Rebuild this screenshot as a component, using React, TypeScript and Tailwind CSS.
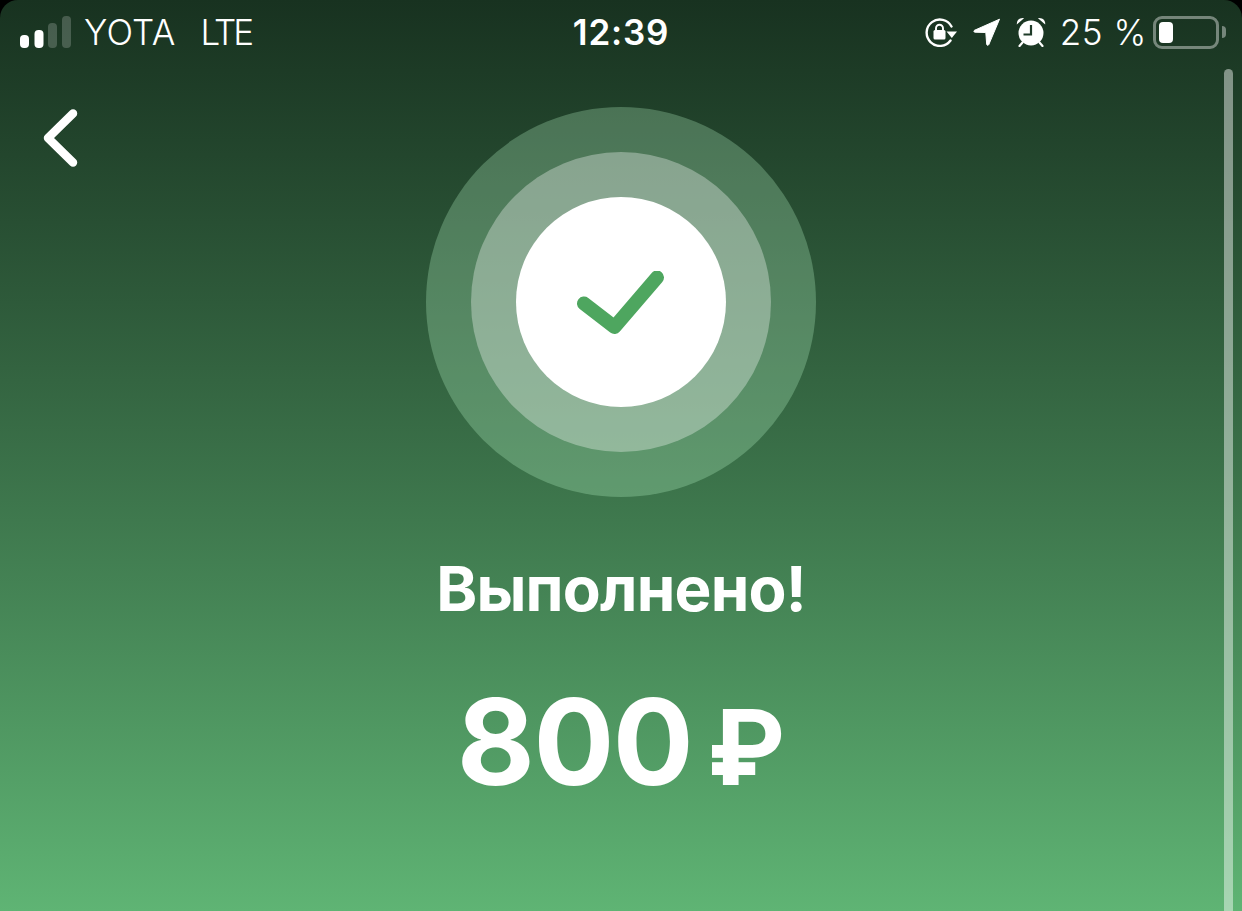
const font = "font-['Inter',_'Noto_Sans',_sans-serif]";

function SignalBars() {
  return (
    <svg width="52" height="32" viewBox="0 0 52 32" className="shrink-0">
      <rect x="0" y="19" width="9" height="13" rx="4" fill="#fff" />
      <rect x="14.500" y="14" width="9" height="18" rx="4" fill="#fff" />
      <rect x="28" y="7" width="9" height="25" rx="4" fill="#fff" fillOpacity="0.2" />
      <rect x="42" y="0" width="9" height="32" rx="4" fill="#fff" fillOpacity="0.2" />
    </svg>
  );
}

function RotationLock() {
  return (
    <svg width="32" height="30" viewBox="0 0 32 30" fill="none" className="shrink-0">
      <path d="M26.500 9.500A13.200 13.200 0 1 0 25.500 23.500" stroke="#fff" strokeWidth="2.400" strokeLinecap="round" />
      <path d="M21.500 14.500h10.500l-5.200 6.500z" fill="#fff" />
      <rect x="8.500" y="13" width="12" height="9.500" rx="1.500" fill="#fff" />
      <path d="M11 13.500v-2.300a3.500 3.500 0 0 1 7 0v2.300" stroke="#fff" strokeWidth="1.900" />
    </svg>
  );
}

function LocationArrow() {
  return (
    <svg width="28" height="28" viewBox="0 0 28 28" className="shrink-0">
      <path d="M26.500 1.200 1.500 12.300c-1 .5-.7 1.900.4 1.900l10.900.3.900 11.800c.1 1.200 1.600 1.400 2.100.3z" fill="#fff" stroke="#fff" strokeWidth="1" strokeLinejoin="round" />
    </svg>
  );
}

function AlarmClock() {
  return (
    <svg width="30" height="30" viewBox="0 0 30 30" fill="none" className="shrink-0">
      <circle cx="15" cy="16" r="12.500" fill="#fff" />
      <path d="M15 8v9.500H7.500" stroke="#1e3a28" strokeWidth="2.200" />
      <path d="M.8 7.500C.5 3.500 3.500.5 8 1.200z" fill="#fff" />
      <path d="M29.200 7.500C29.500 3.500 26.500.5 22 1.200z" fill="#fff" />
      <path d="M6.500 25.500 3.500 29M23.500 25.500l3 3.500" stroke="#fff" strokeWidth="2.200" strokeLinecap="round" />
    </svg>
  );
}

function Battery() {
  return (
    <div className="flex items-center shrink-0">
      <div className="w-[66px] h-[33px] rounded-[9px] border-[3px] border-white/40 p-[3px]">
        <div className="w-[14px] h-full rounded-[4px] bg-white" />
      </div>
      <div className="ml-[3px] w-[4px] h-[12px] rounded-r-full bg-white/40" />
    </div>
  );
}

function StatusBar() {
  return (
    <div className="grid grid-cols-[1fr_auto_1fr] items-center h-[64px] text-white text-[35px] leading-none">
      <div className="flex items-center pl-[20px]">
        <SignalBars />
        <span className="ml-[12px] font-light tracking-[0.3px]">YOTA</span>
        <span className="ml-[25px] font-light tracking-[-3px]">LTE</span>
      </div>
      <div className="font-semibold tracking-[0.8px]">12:39</div>
      <div className="flex items-center justify-end pr-[16px]">
        <RotationLock />
        <div className="ml-[16px]"><LocationArrow /></div>
        <div className="ml-[15px]"><AlarmClock /></div>
        <span className="ml-[14px] font-light tracking-[0.6px]">25 %</span>
        <div className="ml-[6px]"><Battery /></div>
      </div>
    </div>
  );
}

function CheckCircle() {
  return (
    <div className="rounded-full bg-[#c0ffd0]/27 p-[45px]">
      <div className="rounded-full bg-white/33 p-[45px]">
        <div className="w-[210px] h-[210px] rounded-full bg-white flex items-center justify-center">
          <svg width="90" height="66" viewBox="0 0 90 66" fill="none" className="mt-[3px] ml-[-1px]">
            <path d="M8 32.500 38.500 56 81 6.500" stroke="#4ea65f" strokeWidth="14" strokeLinecap="round" strokeLinejoin="round" />
          </svg>
        </div>
      </div>
    </div>
  );
}

export default function App() {
  return (
    <div className="h-[911px] bg-black overflow-hidden">
      <div className={`relative h-full rounded-t-[18px] overflow-hidden bg-gradient-to-b from-[#183220] to-[#5fb474] ${font}`}>
        <StatusBar />

        <div className="grid grid-cols-[1fr_auto_1fr] pt-[43px]">
          <div className="pl-[41px] pt-[1px]">
            <svg width="38" height="60" viewBox="0 0 38 60" fill="none">
              <path d="M32 5.500 7 30l25 24.500" stroke="#fff" strokeWidth="8.500" strokeLinecap="round" strokeLinejoin="round" />
            </svg>
          </div>
          <CheckCircle />
          <div />
        </div>

        <div className="flex flex-col items-center text-white">
          <h1 className="mt-[54px] text-[62px] leading-[76px] font-bold tracking-[-0.8px]">Выполнено!</h1>
          <div className="mt-[50px] flex items-baseline leading-[130px] font-bold">
            <span className="text-[120px] tracking-[-1.500px]">800</span>
            <span className="ml-[15px] text-[105px]">₽</span>
          </div>
        </div>

        <div className="absolute top-[69px] bottom-0 right-[9px] w-[9px] rounded-t-full bg-white/45" />
      </div>
    </div>
  );
}
